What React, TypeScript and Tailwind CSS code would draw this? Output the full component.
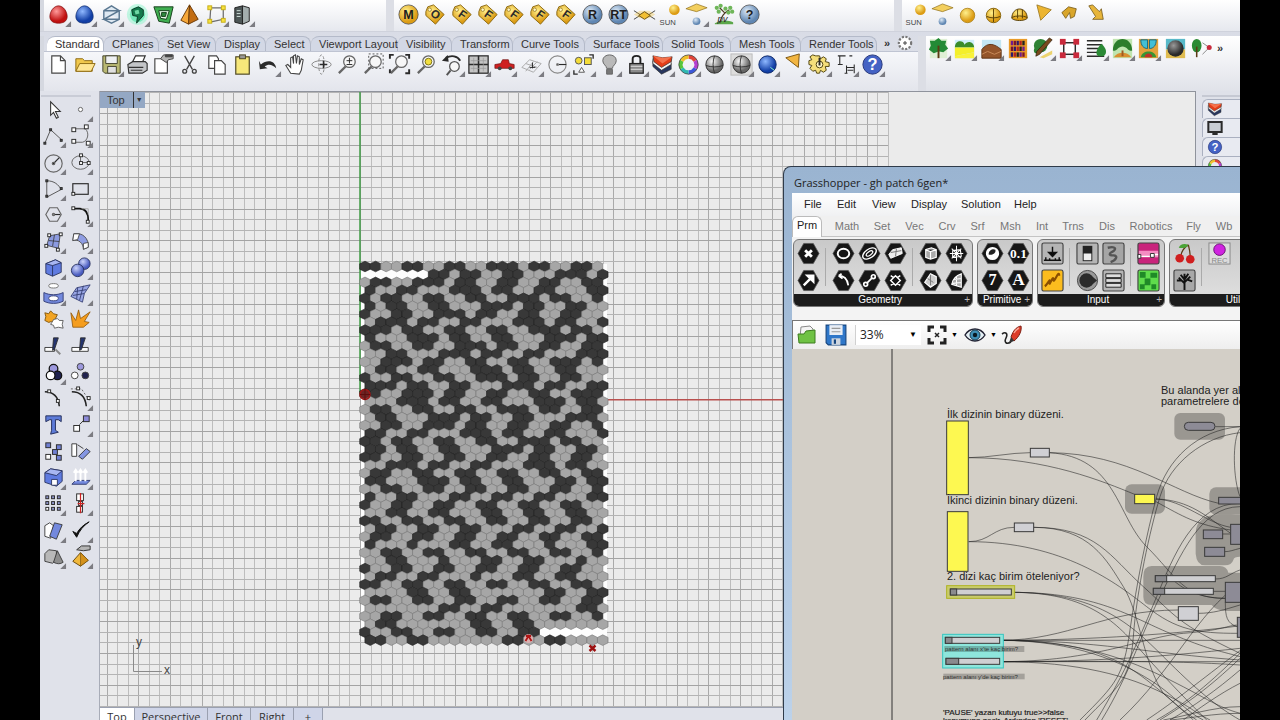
import { useState } from 'react';
import type { ReactNode } from 'react';

const INK = '#2b2b2b';

// One string per row of tiles: "#" dark, "." light, blank for a missing tile
const TILES = [
    '##..##..##..###.##..##.',
    '      ##.##..##...###.#',
    '.##..###.##..##..##..##',
    '#..##...###.##..##...##',
    '#.##..##..##..###.##..#',
    '#.##..##...###.##..##..',
    '#..##..###.##..##..##..',
    '.###.##..##...###.##..#',
    '###.##..##..##..###.##.',
    '#...###.##..##...###.##',
    '.##..##..###.##..##..##',
    '..##...###.##..##...###',
    '..###.##..##..##..###.#',
    '.##..##...###.##..##...',
    '#..##..##..###.##..##..',
    '###.##..##...###.##..##',
    '##..###.##..##..##..###',
    '...###.##..##...###.##.',
    '.##..##..##..###.##..##',
    '.##...###.##..##...###.',
    '..##..###.##..##..##..#',
    '##..##...###.##..##...#',
    '##.##..##..##..###.##..',
    '##.##..##...###.##..##.',
    '##..##..##..##..##..##.',
    '..###.##..##...###.##..',
    '.##..##..##..##..##..##',
    '##...###.##..##...##.##',
    '..##..##..##..##..##..#',
    '#..##...##..##..##...##',
    '#..##..##..##..##..##..',
    '..##..##...##..##..##..',
    '##..##..##..##..##..##.',
    '.##..##..##...##..##..#',
    '.##..##..##..##..##..##',
    '#...#...##..##...#...##',
    '..##..##..##..##..##..#',
    '..##...#...##..##...#..',
    '#..##..##..##..##..##..',
    '.##..##...#...##..##...',
    '##..##..##..##..##..##.',
    '....##..##.......##..##',
    '.##..##..##..##..##..##',
    '.......##..##.......##.',
    '..##..##..##..##..##..#',
    '.##.......##..##.......',
    '#..##..##..##..##      ',
    '##..##.......##..##....',
];

const tag = (letter: string) => (
    <g>
        <path d="M3 9 5 4 11 2 22 12 13 22 3 13z" fill="url(#gold)" stroke="#8d6a14" strokeWidth="1" />
        <circle cx="7" cy="7" r="1.8" fill="#fff6c0" stroke="#8d6a14" strokeWidth=".7" />
        <text x="13" y="16" textAnchor="middle" fontSize="12" fontWeight="bold" fill={INK} transform="rotate(35 13 12)">{letter}</text>
    </g>
);

const badge = (letter: string, fill: string) => (
    <g>
        <circle cx="12" cy="12" r="10" fill={fill} stroke="#4b4b4b" strokeWidth=".8" />
        <text x="12" y="17" textAnchor="middle" fontSize="13" fontWeight="bold" fill="#1d1d1d">{letter}</text>
    </g>
);

const lens = (
    <g fill="none" stroke="#666">
        <circle cx="14" cy="9" r="6" fill="#f7f7f7" strokeWidth="1.3" />
        <path d="M10 14 3 21" strokeWidth="2.4" />
    </g>
);

const sq = (x: number, y: number, fill = '#fff', s = 4) => (
    <rect x={x} y={y} width={s} height={s} fill={fill} stroke={INK} strokeWidth="1" />
);

const GLYPHS: Record<string, ReactNode> = {
    redBall: <path d="M12 3C7 3 3 9 3 14c0 5 4 7 9 7s9-2 9-7c0-5-4-11-9-11z" fill="url(#red)" stroke="#7d0d0d" strokeWidth=".7" />,
    blueBall: <path d="M12 3C7 3 3 9 3 14c0 5 4 7 9 7s9-2 9-7c0-5-4-11-9-11z" fill="url(#blue)" stroke="#0b2767" strokeWidth=".7" />,
    wireCube: <path d="M12 3 20 8v9l-8 4-8-4V8zM4 8h16L4 17h16M12 3 4 8" fill="#dfe9f2" stroke="#5b7891" strokeWidth="1.5" />,
    glow: (
        <g>
            <circle cx="12" cy="12" r="11" fill="#8df5cb" opacity=".5" />
            <circle cx="12" cy="12" r="8" fill="#55e3aa" opacity=".7" />
            <path d="M6 7l7-3 5 3v6l-7 8 1-7-5-1z" fill="#157a4d" stroke="#0c3b28" />
            <path d="M9 8l4-1 1 4-4 1z" fill="#6fd9a5" />
        </g>
    ),
    greenBox: (
        <g stroke="#173f1c">
            <path d="M2 4h20l-4 17-11-2z" fill="#3fae50" />
            <path d="M7 8h11l-3 9-6-1z" fill="#e2f7e5" />
            <path d="M10 10h5l-1 4h-4z" fill="#2e8a3e" />
        </g>
    ),
    pyramid: <g stroke="#6b3a07"><path d="M12 2 3 18l8 4z" fill="#f6a83a" /><path d="M12 2l9 15-10 5z" fill="#c26d13" /></g>,
    cage: (
        <g stroke="#6d6d6d">
            <path d="M6 5h13v12L5 20z" fill="none" strokeWidth="1.3" />
            {[[3, 3], [17, 3], [17, 16], [3, 17]].map(([x, y]) => <rect key={`${x}${y}`} x={x} y={y} width="4" height="4" fill="#f7e23b" stroke="#c7ae1a" />)}
        </g>
    ),
    server: <g stroke="#222"><path d="M4 5l8-2v19l-8-2z" fill="#4d5656" /><path d="M12 3l7 2v14l-7 3z" fill="#a3adad" /><path d="M6 8h4M6 11h4M6 14h4" stroke="#cfe0da" /></g>,
    badgeM: badge('M', 'url(#gold)'),
    tagO: tag('O'),
    tagF: tag('F'),
    badgeR: badge('R', 'url(#steel)'),
    badgeRT: badge('RT', 'url(#steel)'),
    badgeQ: badge('?', 'url(#steel)'),
    layers: <g stroke="#6d5310"><path d="M1 8l11 7 11-7M1 17l11-7 11 7" fill="none" stroke="#444" /><path d="M1 12l6-4h10l6 4-6 4H7z" fill="#f2bf31" fillOpacity=".35" stroke="none" /><path d="M6 13l6-4 6 4-6 4z" fill="#f2bf31" /></g>,
    sun: <g><circle cx="16" cy="7" r="5.5" fill="url(#gold)" /><text x="9" y="23" textAnchor="middle" fontSize="8" fill="#444">SUN</text></g>,
    skylight: <g><path d="M1 6 12 1l11 4-11 4z" fill="#f3cf5e" stroke="#8b6a13" strokeWidth=".7" /><circle cx="12" cy="19" r="4" fill="url(#steel)" /></g>,
    plant: (
        <g>
            <path d="M3 21c8-4 14-3 19-1v2H3z" fill="#5ba74a" />
            <path d="M8 21c2-9 6-11 10-14M13 10 8 5" stroke="#4b3b20" strokeWidth="1.3" fill="none" />
            {[[5, 5], [9, 3], [14, 6], [19, 5], [17, 10], [7, 9], [21, 9]].map(([x, y]) => <circle key={`${x}-${y}`} cx={x} cy={y} r="2.2" fill="#6fb659" />)}
            <text x="11" y="20" textAnchor="middle" fontSize="10" fontStyle="italic" fill={INK}>pv</text>
        </g>
    ),
    goldBall: <circle cx="12" cy="13" r="7.5" fill="url(#gold)" stroke="#a67a10" strokeWidth=".8" />,
    goldGlobe: <g stroke="#8a6810"><circle cx="12" cy="13" r="7.5" fill="url(#gold)" /><path d="M5 14c4 2 10 2 14 0M12 6v14" fill="none" stroke="#584107" /></g>,
    goldDome: <g stroke="#584107"><path d="M4 16c0-13 16-13 16 0-3 3-13 3-16 0z" fill="url(#gold)" /><path d="M4 15c4-2 12-2 16 0M10 7v9M15 7v9" fill="none" /></g>,
    goldTri: <path d="M3 2l15 5-11 11z" fill="#ecb531" stroke="#94711b" strokeWidth=".8" />,
    goldArch: <path d="M3 10l7-6 8 2-2 8-4 2-1-6-4 6z" fill="#d9a62b" stroke="#715513" strokeWidth=".8" />,
    goldArrow: <path d="M4 3l4-1 7 7 2-3 2 11H8l3-3z" fill="#e7b53a" stroke="#715513" strokeWidth=".8" />,
    page: <path d="M5 3h9l5 5v13H5zM14 3v5h5" fill="#fff" stroke="#444" strokeWidth="1.2" />,
    folder: <g stroke="#8f6b12"><path d="M3 6h7l2 2h8v11H3z" fill="#f1c84c" /><path d="M3 19l4-8h16l-4 8z" fill="#ffe693" /></g>,
    disk: <g stroke="#44442e"><path d="M3 3h18v18H5l-2-2z" fill="#b9b873" /><path d="M6 3h12v8H6z" fill="#eef0f3" /><path d="M8 14h9v7H8z" fill="#e0e0e0" /></g>,
    printer: <g stroke="#333" strokeWidth="1.2"><path d="M7 9l3-6h10l-3 7z" fill="#fff" /><path d="M2 12l5-3h13l2 2v7l-5 3H3z" fill="#c3c5c8" /><path d="M3 15h15M5 18h12" /></g>,
    notes: <g stroke="#444"><path d="M3 6h13v15H3z" fill="#fff" strokeWidth="1.2" /><path d="M9 6l3-4h10v4l-5 1-2 3z" fill="#b5b5b5" /><path d="M14 2h7v2h-7z" fill="#444" /></g>,
    cut: <g fill="none" stroke="#444" strokeWidth="1.4"><path d="M7 3l8 14M17 3 9 17" /><circle cx="7" cy="19" r="2" /><circle cx="17" cy="19" r="2" /></g>,
    copy: <g fill="#fff" stroke="#444" strokeWidth="1.2"><path d="M4 3h8l2 3v10H4z" /><path d="M10 8h7l4 4v10H10z" /></g>,
    paste: <g stroke="#4d4622"><rect x="5" y="4" width="14" height="18" fill="#f7e87a" strokeWidth="1.2" /><rect x="9" y="2" width="6" height="4" fill="#999" /></g>,
    undo: <path d="M2 8l1 9 8-1-3-2c4-3 8-2 12 2-1-8-9-10-16-4z" fill={INK} />,
    hand: <path d="M8 21 3 13l2-1 3 3V5l2-1 1 7V3l2-1 1 9 1-8 2 1v8l2-6 2 1-2 11-2 4z" fill="#fff" stroke="#444" strokeWidth="1.1" />,
    rotate: <g fill="none" stroke="#888"><ellipse cx="12" cy="12" rx="10" ry="4" /><ellipse cx="12" cy="12" rx="3" ry="10" strokeDasharray="3 2" /><path d="M14 8v8M10 12h8" stroke={INK} strokeWidth="1.4" /></g>,
    zoomIn: <g>{lens}<path d="M11 8h6M14 5v6M11 12h6" stroke={INK} /></g>,
    zoomWin: <g>{lens}<rect x="7" y="1" width="15" height="15" fill="none" stroke="#555" strokeDasharray="2 2" /></g>,
    zoomExt: <g>{lens}<path d="M2 6V2h4M18 2h4v4M22 17v4h-4M2 17v4" fill="none" stroke={INK} strokeWidth="2" /></g>,
    zoomSel: <g>{lens}<circle cx="14" cy="9" r="3.5" fill="#f2df3f" stroke="#7d7315" /></g>,
    zoomUndo: <g><circle cx="14" cy="14" r="5" fill="#f7f7f7" stroke="#555" strokeWidth="1.3" /><path d="M10 18l-4 5" stroke="#555" strokeWidth="2" /><path d="M5 5c6-3 12-2 15 3" stroke={INK} strokeWidth="2" fill="none" /><path d="M1 8l6-6 1 7z" fill={INK} /></g>,
    fourView: <g fill="#c4c4c4" stroke={INK}><rect x="2" y="3" width="20" height="18" strokeWidth="1.3" /><path d="M12 3v18M2 12h20" strokeWidth="1.6" /><path d="M7 5v14M17 5v14M4 8h16M4 16h16" stroke="#9a9a9a" strokeWidth=".7" /></g>,
    car: <g><path d="M2 12l6-1 2-4h6l1 4 5 1v4H2z" fill="#cf2121" stroke="#6d0d0d" strokeWidth=".7" /><circle cx="7" cy="16" r="2" fill="#444" /><circle cx="18" cy="16" r="2" fill="#444" /></g>,
    cplane: <g fill="none" stroke="#aaa"><path d="M2 15 10 7l12 4-8 9zM6 11l12 4M10 17l8-8M6 19l8-10" /><path d="M10 15h6M13 10v6" stroke={INK} /></g>,
    circleTool: <g fill="none" stroke="#888" strokeWidth="1.2"><circle cx="12" cy="12" r="9" /><path d="M12 12h9" stroke={INK} /><circle cx="12" cy="12" r="1" fill={INK} /></g>,
    shapes: <g stroke="#555"><circle cx="7" cy="8" r="3.5" fill="#f4dc38" /><rect x="13" y="5" width="7" height="7" fill="#f4dc38" /><path d="M7 20l3-5 3 5z" fill="#fff" /><path d="M18 2h4v4M2 18v4h4" fill="none" stroke={INK} strokeWidth="1.4" /></g>,
    bulb: <g stroke="#666"><path d="M9 16c0-3-4-4-4-8 0-8 14-8 14 0 0 4-4 5-4 8z" fill="#b9b9b9" /><path d="M9 17h6v5H9z" fill="#777" /></g>,
    lock: <g stroke="#222" strokeWidth="1.3"><path d="M8 11V6c0-4 8-4 8 0v5" fill="none" strokeWidth="2" /><rect x="5" y="11" width="14" height="10" fill="#8b8b8b" /><path d="M6 14h12M6 17h12" stroke="#ccc" /></g>,
    render: <g stroke="#333" strokeWidth=".7"><path d="M2 8v6l9 8 10-5v-6z" fill="#27365f" /><path d="M2 6v5l9 7 10-6V6z" fill="#f4f4f4" /><path d="M2 3l10 2 10-1-1 5-10 6-8-6z" fill="#e43d18" /><path d="M2 3l10 2 10-1-10 7z" fill="#f4714c" stroke="none" /></g>,
    wheel: (
        <g fill="none" strokeWidth="4">
            <path d="M12 4a8 8 0 0 1 7 4" stroke="#e0453a" /><path d="M19 8a8 8 0 0 1 0 8" stroke="#b53ed0" /><path d="M19 16a8 8 0 0 1-7 4" stroke="#3b57d9" />
            <path d="M12 20a8 8 0 0 1-7-4" stroke="#2fb8b2" /><path d="M5 16a8 8 0 0 1 0-8" stroke="#56c63a" /><path d="M5 8a8 8 0 0 1 7-4" stroke="#f0c02c" />
            <circle cx="12" cy="12" r="10" stroke="#444" strokeWidth=".8" />
        </g>
    ),
    greyGlobe: <g stroke="#333"><circle cx="12" cy="12" r="9" fill="url(#grey)" /><path d="M3 13c6 2 12 2 18 0M12 3c-2 5-2 13 0 18" fill="none" /></g>,
    greyGlobe2: <g stroke="#333"><rect x="1" y="1" width="22" height="22" fill="#ddd" stroke="#bbb" /><circle cx="12" cy="12" r="9" fill="url(#grey)" /><path d="M3 13c6 2 12 2 18 0M12 3c-2 5-2 13 0 18" fill="none" /></g>,
    blueGlobe: <g><circle cx="12" cy="12" r="9" fill="url(#blue)" stroke="#0b2767" /><path d="M15 15l4 3" stroke="#8fc" /></g>,
    cone: <path d="M4 5 18 1l-1 14z" fill="#f2b541" stroke="#7b5512" />,
    gear: <g stroke="#4f430f"><path d="M9 3h3l1 3 3-2 3 2-1 3 4 1v4l-4 0 1 4-3 2-3-2-1 3h-3l-1-3-3 1-3-3 2-3-3-1v-4l3-1-2-3 3-2 3 1z" fill="#f5df7b" /><circle cx="12" cy="12" r="3.5" fill="#fff7c9" /><path d="M12 5v8" stroke={INK} strokeWidth="2" /></g>,
    dims: <g fill="none" stroke={INK} strokeWidth="1.1"><path d="M3 3h8M5 3v9M3 12h5M12 13v8M12 15l8 0M20 12v9M10 21h3M13 18h6M15 3h3" /></g>,
    help: <g><circle cx="12" cy="12" r="10" fill="#4462c4" stroke="#27377a" /><text x="12" y="18" textAnchor="middle" fontSize="17" fontWeight="bold" fill="#fff">?</text></g>,
    tree: <g><path d="M3 2h18v20H3z" fill="#dff0d5" /><path d="M12 1l3 3 5 0-1 4 3 4-5 4-4-1-1 0-5 2-5-4 2-4-1-5 5 0z" fill="#238a35" /><path d="M12 9v13" stroke="#5b3b14" strokeWidth="2" /></g>,
    park: <g><rect x="2" y="3" width="20" height="19" fill="#cfeefb" /><path d="M2 11c0-8 9-8 10-3 3-5 10-3 10 3z" fill="#3b8c2b" /><path d="M2 11h20v5L2 20z" fill="#f4ef2a" /><path d="M2 20l20-4v6H2z" fill="#f9f23a" /></g>,
    terrain: <g><rect x="2" y="3" width="20" height="19" fill="#c4e6f3" /><path d="M2 13c6-8 13-6 20 0v9H2z" fill="#94552a" stroke="#5e3212" /><path d="M2 18l6-3 7 3 7-3" stroke="#c98a58" fill="none" /></g>,
    shelf: (
        <g>
            <rect x="3" y="2" width="19" height="20" fill="#e99b28" />
            {[4, 10, 16].map((y) => [5, 8, 11, 14, 17].map((x, i) => <rect key={`${x}-${y}`} x={x} y={y} width="2.4" height="4.6" fill={['#7a1230', '#2d1a6b', '#b32222', '#222', '#701b8f'][(i + y) % 5]} />))}
        </g>
    ),
    paint: <g><circle cx="9" cy="9" r="7" fill="#2f8235" /><circle cx="5" cy="14" r="3" fill="#2f8235" /><path d="M21 3 8 18l-4 2 1-5L18 1z" fill="#7a4a1d" stroke="#2d1a08" strokeWidth=".7" /><path d="M8 21l13-7v4l-9 4z" fill="#ecd36d" /></g>,
    frame: <g><rect x="6" y="6" width="12" height="12" fill="#fff" stroke={INK} strokeWidth="1.5" />{[[2, 2], [16, 2], [2, 16], [16, 16]].map(([x, y]) => <rect key={`${x}${y}`} x={x} y={y} width="6" height="6" fill="#c92a3c" />)}</g>,
    list: <g><path d="M2 4h16M2 8h16M2 12h16M2 16h16M2 20h18" stroke={INK} strokeWidth="1.5" /><path d="M14 20c-5-3 0-10 3-13 5 4 7 10 2 13z" fill="#2b8a36" /></g>,
    arch: <g><rect x="2" y="2" width="20" height="20" fill="#bfe5b0" /><path d="M2 14c0-16 20-16 20 0-4 2-5-4-10-4S6 16 2 14z" fill="#2c7d2c" /><path d="M3 21c4-6 14-6 18 0z" fill="#d98f30" /><path d="M12 14v6" stroke="#a05a20" strokeWidth="2" /></g>,
    garden: <g><rect x="2" y="2" width="20" height="20" fill="#e3a23b" /><path d="M4 3h7v9c-4 0-7-3-7-9zM13 3h7c0 6-3 9-7 9z" fill="#42bfd6" stroke="#176a80" /><path d="M4 21c1-8 15-8 16 0z" fill="#399533" /><path d="M8 21c0-5 8-5 8 0z" fill="#c2302a" /></g>,
    sphere: <g><path d="M2 2h20v11H2z" fill="#58b9c9" /><path d="M2 13h20v9H2z" fill="#e0bc50" /><circle cx="12" cy="12" r="8.5" fill="url(#dark)" /></g>,
    treePin: <g><ellipse cx="7" cy="9" rx="5" ry="7" fill="#2a8a33" /><path d="M7 10v11" stroke="#5b3b14" strokeWidth="1.6" /><path d="M13 6l7 5-7 7" fill="none" stroke="#888" /><circle cx="20" cy="11" r="2.6" fill="#c92a3c" /></g>,
    arrow: <path d="M9 4v14l3-3 3 6 2-1-3-6h5z" fill="#fff" stroke="#333" strokeWidth="1.1" />,
    point: <circle cx="12" cy="12" r="2.2" fill="#fff" stroke="#666" />,
    polyline: <g stroke="#555" fill="none"><path d="M3 20 9 6l12 11" />{sq(2, 19, '#555', 2)}{sq(8, 5, '#555', 2)}{sq(19, 16, '#555', 2)}</g>,
    curve: <g stroke="#666" fill="none"><path d="M5 5h12c5 5 2 13-3 14H5" />{sq(3, 4)}{sq(3, 16)}{sq(16, 1)}{sq(18, 18)}</g>,
    circle: <g stroke="#666" fill="none" strokeWidth="1.2"><circle cx="12" cy="13" r="9" /><path d="M12 13l6-6" stroke={INK} /><circle cx="12" cy="13" r="1.3" fill={INK} /></g>,
    ellipse: <g stroke="#666" fill="none"><ellipse cx="12" cy="12" rx="9" ry="7" /><path d="M12 5v7h9" />{sq(11, 3, '#fff', 3)}{sq(11, 11, '#fff', 3)}{sq(19, 11, '#fff', 3)}</g>,
    arc: <g stroke="#555" fill="none"><path d="M5 4c8 0 12 4 15 9L5 21z" />{sq(4, 3, '#555', 2)}{sq(19, 11, '#555', 2)}{sq(4, 19, '#555', 2)}</g>,
    rect: <g stroke={INK} fill="none"><rect x="4" y="7" width="16" height="11" strokeWidth="1.2" />{sq(3, 16, '#fff', 3)}</g>,
    hexagon: <g stroke="#666" fill="none" strokeWidth="1.2"><path d="M4 12l4-7h8l4 7-4 7H8z" /><path d="M12 12h7" stroke={INK} /><circle cx="12" cy="12" r="1.2" /></g>,
    fillet: <g fill="none"><path d="M5 6h6c6 0 9 4 9 12" stroke="#111" strokeWidth="1.8" /><path d="M13 6h7v6" stroke="#aaa" />{sq(3, 4, '#fff', 3)}{sq(18, 18, '#fff', 3)}</g>,
    surface: <g stroke="#333" strokeWidth=".8"><path d="M8 6l11-2-2 15-12-3z" fill="#8c9be0" /><path d="M13 5l-2 12M7 11l11 1" fill="none" />{sq(6, 4, '#fff', 3)}{sq(18, 3, '#fff', 3)}{sq(3, 15, '#fff', 3)}{sq(15, 19, '#fff', 3)}</g>,
    sweep: <g stroke="#444" strokeWidth=".9"><path d="M5 4c9-2 16 5 15 14l-5 2C15 14 10 9 4 11z" fill="#8f9de3" /><path d="M5 4l6 0-2 6-5 1zM15 14l5-1v5l-5 2z" fill="#fff" /></g>,
    box: <g stroke="#26305c" strokeWidth=".9"><path d="M4 8l10-4 6 3v10l-9 4-7-3z" fill="#5f7be0" /><path d="M4 8l7 2 9-3-6-3z" fill="#a7b6f2" /><path d="M11 10v11" /></g>,
    spheres: <g stroke="#26305c" strokeWidth=".9"><circle cx="16" cy="8" r="6" fill="url(#lav)" /><circle cx="9" cy="15" r="6.5" fill="url(#lav)" /></g>,
    tube: <g stroke="#39437a"><ellipse cx="12" cy="4" rx="5" ry="2.3" fill="#fff" stroke="#777" /><path d="M2 11c6 3 14 3 20 0v9c-6 3-14 3-20 0z" fill="#7389de" /><ellipse cx="12" cy="17" rx="5" ry="2.6" fill="#fff" /></g>,
    patch: <g stroke="#333c70" strokeWidth=".9"><path d="M2 15 8 6l14-3-6 9-2 9z" fill="#98a5e4" /><path d="M6 10l12-2M9 6l-1 12M15 4l-4 15M4 14l12-2" fill="none" /></g>,
    puzzle: <g strokeWidth=".9"><path d="M3 5l4 1 2-3 3 3 4 1-2 4 1 4-5-1-3 1-4-2 1-4z" fill="#f2a423" stroke="#7b5008" /><path d="M12 12l4-1 2 2 4 0-1 4 1 4-5-1-4 1-1-3-3-1 2-3z" fill="#fff" stroke="#555" /></g>,
    explode: <path d="M2 5l5 8 3-11 2 9 10-7-6 10 5 1-6 5H4z" fill="#f59d1e" stroke="#8c5406" strokeWidth=".8" />,
    trim: <g stroke={INK} strokeWidth=".9"><path d="M3 13h10v4H3z" fill="#fff" /><path d="M12 3h5l-4 12-2 1z" fill="#24346f" /><path d="M14 15l5 5" stroke="#888" strokeWidth="2" /></g>,
    split: <g stroke={INK} strokeWidth=".9"><path d="M3 13h17v4H3z" fill="#fff" /><path d="M12 3h5l-4 12-2 1z" fill="#24346f" /></g>,
    join: <g stroke="#111" strokeWidth="1.3"><circle cx="12" cy="8" r="4.5" fill="#9c98dd" /><circle cx="16" cy="15" r="4.5" fill="#20224e" /><circle cx="9" cy="15" r="4.5" fill="#fff" /></g>,
    dots: <g stroke="#444"><circle cx="12" cy="6" r="3.5" fill="#9c98dd" /><circle cx="6" cy="15" r="3.5" fill="#fff" /><circle cx="17" cy="15" r="3.5" fill="#20224e" /></g>,
    editPts: <g fill="none"><path d="M3 5c9 0 14 6 15 15" stroke="#222" strokeWidth="1.6" />{sq(6, 3, '#fff', 3)}{sq(15, 13, '#fff', 3)}</g>,
    ctrlPts: <g fill="none"><path d="M3 5c9 0 14 6 15 15" stroke="#222" strokeWidth="1.6" /><path d="M2 2h11l8 12" stroke="#666" strokeDasharray="2 2" />{sq(8, 0, '#fff', 3)}{sq(19, 10, '#fff', 3)}</g>,
    text: <path d="M4 3h16l0 6-3-2h-3v11l3 2-8 2 1-4V7H8L4 9z" fill="#5d7bd8" stroke="#26305c" />,
    move: <g stroke={INK}>{sq(5, 13, '#fff', 6)}{sq(15, 3, '#8c8ad8', 6)}<path d="M11 12l4-4" /></g>,
    copies: <g>{sq(4, 3, '#6f7fd2', 5)}{sq(15, 5, '#6f7fd2', 5)}{sq(11, 10, '#6f7fd2', 5)}{sq(4, 15, '#fff', 5)}{sq(15, 16, '#6f7fd2', 5)}</g>,
    orient: <g stroke={INK} strokeWidth=".9"><path d="M3 4h5v13H3z" fill="#fff" /><path d="M10 17l8-8 4 3-8 8z" fill="#8496e2" /><path d="M9 5l6 4" /></g>,
    solid: <g stroke="#26305c" strokeWidth=".9"><path d="M3 7l6-4 12 2v11l-6 5-12-4z" fill="#5f7be0" /><path d="M3 7l12 3 6-5-12-2z" fill="#a7b6f2" /><path d="M10 14h6v6h-6z" fill="#fff" /></g>,
    project: <g><path d="M3 19l4-4h15l-4 4z" fill="#7389de" stroke="#333c70" /><path d="M7 16V5M12 16V5M17 16V5M5 7l2-3 2 3M10 7l2-3 2 3M15 7l2-3 2 3" stroke="#fff" strokeWidth="2" fill="none" /></g>,
    array: <g>{[4, 10, 16].map((x) => [4, 10, 16].map((y) => <g key={`${x}-${y}`}>{sq(x, y, y === 16 && x === 4 ? '#fff' : '#8c92c9', 3)}</g>))}</g>,
    align: <g>{sq(8, 2, '#fff', 7)}{sq(10, 10, '#fff', 4)}{sq(8, 15, '#fff', 6)}<path d="M12 1v21M9 12h7" stroke="#c22" strokeWidth="1.3" /></g>,
    bend: <g stroke="#333" strokeWidth=".9"><path d="M3 7l5-3 4 3-3 13-6-2z" fill="#fff" /><path d="M13 4l8 2-6 15-7-3z" fill="#7389de" /></g>,
    check: <path d="M4 13l4 6C11 12 15 7 21 3 15 6 11 10 8 15z" fill="#111" stroke="#111" />,
    prims: <g stroke="#333" strokeWidth=".9"><path d="M3 9l4-4 8 1v9l-4 4-8-2z" fill="#b8b8b8" /><path d="M16 6l6 12c-3 2-6 2-10 0z" fill="#8d8d8d" /></g>,
    analyze: <g stroke="#6b4a0b"><path d="M4 17l8-9 8 8-8 6z" fill="#f0b83c" /><path d="M12 8v14l8-6z" fill="#d4921c" strokeWidth=".6" /><path d="M8 5l5-4h9v4l-7 1z" fill="#b5b5b5" stroke="#333" /></g>,
};

const ROW_A: [string, string, boolean?][] = [
    ['redBall', 'V-Ray render', true], ['blueBall', 'V-Ray RT', true], ['wireCube', 'Mesh box', true], ['glow', 'Emitter', true],
    ['greenBox', 'Deform', true], ['pyramid', 'Pyramid', true], ['cage', 'Cage edit', true], ['server', 'Render server', true],
];

const ROW_B: [string, string, boolean?][] = [
    ['badgeM', 'Material editor'], ['tagO', 'Options'], ['tagF', 'Frame 1'], ['tagF', 'Frame 2'], ['tagF', 'Frame 3'], ['tagF', 'Frame 4'], ['tagF', 'Frame 5'],
    ['badgeR', 'Render'], ['badgeRT', 'Render RT'], ['layers', 'Planes'], ['sun', 'Sun'], ['skylight', 'Dome light', true], ['plant', 'Proxy plant'], ['badgeQ', 'About'],
];

const ROW_C: [string, string, boolean?][] = [
    ['sun', 'Add sun'], ['skylight', 'Add skylight'], ['goldBall', 'Omni light'], ['goldGlobe', 'Sphere light'],
    ['goldDome', 'Dome'], ['goldTri', 'Spot light'], ['goldArch', 'IES light'], ['goldArrow', 'Directional light'],
];

const ROW_STANDARD: [string, string, boolean?][] = [
    ['page', 'New'], ['folder', 'Open'], ['disk', 'Save', true], ['printer', 'Print'], ['notes', 'Notes'], ['cut', 'Cut'], ['copy', 'Copy'], ['paste', 'Paste'],
    ['undo', 'Undo', true], ['hand', 'Pan'], ['rotate', 'Rotate view'], ['zoomIn', 'Zoom dynamic'], ['zoomWin', 'Zoom window'], ['zoomExt', 'Zoom extents'],
    ['zoomSel', 'Zoom selected'], ['zoomUndo', 'Undo view', true], ['fourView', 'Four views', true], ['car', 'Named views', true], ['cplane', 'Set CPlane', true],
    ['circleTool', 'Object snap', true], ['shapes', 'Select', true], ['bulb', 'Hide', true], ['lock', 'Lock', true], ['render', 'Layers', true], ['wheel', 'Colors', true],
    ['greyGlobe', 'Shade'], ['greyGlobe2', 'Shade selected', true], ['blueGlobe', 'Render preview', true], ['cone', 'Spotlight', true], ['gear', 'Properties', true],
    ['dims', 'Dimensions', true], ['help', 'Help', true],
];

const ROW_LANDS: [string, string, boolean?][] = [
    ['tree', 'Plants', true], ['park', 'Ground', true], ['terrain', 'Terrain', true], ['shelf', 'Library'], ['paint', 'Materials', true], ['frame', 'Zones', true],
    ['list', 'Lists', true], ['arch', 'Arch', true], ['garden', 'Garden', true], ['sphere', 'Image'], ['treePin', 'Tag plant'],
];

const PALETTE: [string, string, boolean?][] = [
    ['arrow', 'Cancel'], ['point', 'Point', true], ['polyline', 'Polyline', true], ['curve', 'Curve', true], ['circle', 'Circle', true], ['ellipse', 'Ellipse', true],
    ['arc', 'Arc', true], ['rect', 'Rectangle', true], ['hexagon', 'Polygon', true], ['fillet', 'Fillet', true], ['surface', 'Surface', true], ['sweep', 'Sweep', true],
    ['box', 'Box', true], ['spheres', 'Boolean', true], ['tube', 'Surface tools', true], ['patch', 'Mesh', true], ['puzzle', 'Join'], ['explode', 'Explode'],
    ['trim', 'Trim'], ['split', 'Split'], ['join', 'Group', true], ['dots', 'Ungroup'], ['editPts', 'Edit points'], ['ctrlPts', 'Control points', true],
    ['text', 'Text'], ['move', 'Move', true], ['copies', 'Copy objects'], ['orient', 'Orient'], ['solid', 'Solid edit', true], ['project', 'Project', true],
    ['array', 'Array', true], ['align', 'Align', true], ['bend', 'Bend', true], ['check', 'Check', true], ['prims', 'Block', true], ['analyze', 'Analyze', true],
];

function Tool({ icon, label, more }: { icon: string; label: string; more?: boolean }) {
    return (
        <button type="button" aria-label={label} title={label} className="flex items-center justify-center">
            <svg viewBox="0 0 27 27" className="size-[26px] shrink-0">
                <g transform="translate(1 1)">{GLYPHS[icon]}</g>
                {more && <path d="M26 20v6h-6z" fill="#7c7c82" />}
            </svg>
        </button>
    );
}

const tools = (list: [string, string, boolean?][]) => list.map(([icon, label, more]) => <Tool key={label} icon={icon} label={label} more={more} />);

const RHINO_TABS: [string, string][] = [
    ['Standard', 'w-[57px]'], ['CPlanes', 'w-[55px]'], ['Set View', 'w-[57px]'], ['Display', 'w-[50px]'], ['Select', 'w-[45px]'],
    ['Viewport Layout', 'w-[87px]'], ['Visibility', 'w-[54px]'], ['Transform', 'w-[61px]'], ['Curve Tools', 'w-[72px]'],
    ['Surface Tools', 'w-[78px]'], ['Solid Tools', 'w-[68px]'], ['Mesh Tools', 'w-[70px]'], ['Render Tools', 'w-[76px]'],
];

function RhinoToolbars() {
    const [active, setActive] = useState('Standard');

    return (
        <header className="text-[11px] text-[#333]">
            <div className="flex h-8 border-b border-[#cfd2dc] bg-linear-to-b from-white to-[#e6e8ee]">
                <div className="flex w-[346px] border-l-4 border-[#d5d8e0] pb-[2px]">
                    <div className="ml-[2px] grid w-[210px] grid-cols-8">{tools(ROW_A)}</div>
                </div>
                <div className="flex w-[508px] border-l-8 border-[#dcdee5] pb-[2px]">
                    <div className="ml-[2px] grid w-[367px] grid-cols-14">{tools(ROW_B)}</div>
                </div>
                <div className="flex flex-1 border-l-8 border-[#dcdee5] pb-[2px]">
                    <div className="ml-[2px] grid w-[206px] grid-cols-8">{tools(ROW_C)}</div>
                </div>
            </div>
            <div className="flex h-[59px] bg-linear-to-b from-[#d9dce6] to-[#e2e4eb] pt-1">
                <div className="flex w-[878px] flex-col border-l-4 border-[#d5d8e0]">
                    <div className="flex h-4 items-end border-b border-[#bfc4d2] pl-[3px]">
                        {RHINO_TABS.map(([name, width]) => (
                            <button
                                key={name}
                                type="button"
                                onClick={() => setActive(name)}
                                className={`${width} h-[15px] shrink-0 rounded-t-lg border-t border-r border-[#b4bac9] pl-2 text-left leading-[14px] whitespace-nowrap ${active === name ? 'bg-white' : 'bg-[#d3d8e5]'}`}
                            >
                                {name}
                            </button>
                        ))}
                        <button type="button" aria-label="More tabs" className="w-5 text-center leading-4 font-bold">»</button>
                        <button type="button" aria-label="Toolbar options" className="h-4 w-4">
                            <svg viewBox="0 0 16 16" className="size-4">
                                <circle cx="8" cy="8" r="6" fill="#fff" stroke="#777" strokeWidth="2.5" strokeDasharray="2 1.5" />
                                <circle cx="8" cy="8" r="5" fill="#fff" />
                                <path d="M6 8h4M8 6v4" stroke="#444" />
                            </svg>
                        </button>
                    </div>
                    <div className="flex flex-1 items-start bg-linear-to-b from-[#f6f7fa] to-[#e3e5ec]">
                        <div className="ml-[2px] grid w-[840px] grid-cols-32">{tools(ROW_STANDARD)}</div>
                    </div>
                </div>
                <div className="flex flex-1 items-start border-l-8 border-[#dcdee5] bg-linear-to-b from-white to-[#e0e2e9]">
                    <div className="grid w-[289px] grid-cols-11">{tools(ROW_LANDS)}</div>
                    <button type="button" aria-label="More tools" className="px-[2px] leading-6 font-bold">»</button>
                </div>
            </div>
        </header>
    );
}

// Lines fall every 10.56 units, counted out from the origin of the plane
function Grid() {
    const cols = Array.from({ length: 75 }, (_, i) => i - 24);
    const rows = Array.from({ length: 59 }, (_, i) => i - 29);
    return (
        <g shapeRendering="crispEdges" strokeWidth="1">
            {cols.map((n) => (
                <path key={`c${n}`} d={`M${Math.round(360 + n * 10.56) + 0.5} 92V707`} stroke={n % 3 ? '#bdbdbd' : '#aaaaaa'} />
            ))}
            {rows.map((n) => (
                <path key={`r${n}`} d={`M100 ${Math.round(399 + n * 10.58) + 0.5}H888`} stroke={n % 3 ? '#b4b4b4' : '#a4a4a4'} />
            ))}
        </g>
    );
}

function HexPanel() {
    return (
        <g strokeWidth=".6">
            <rect x="361" y="264" width="246" height="376" fill="#fdfdfd" />
            {TILES.map((row, r) =>
                row.split('').map((cell, c) => {
                    if (cell === ' ') return null;
                    const x = 365 + c * 10.57 + (r % 2) * 5.2;
                    const y = 266.5 + r * 7.95;
                    const dark = cell === '#';
                    return (
                        <path
                            key={`${r}-${c}`}
                            d={`M${x} ${y - 5.3}l5.3 2.6v5.4l-5.3 2.6l-5.3-2.6v-5.4z`}
                            fill={dark ? '#383838' : '#a6a6a6'}
                            stroke={dark ? '#1f1f1f' : '#757575'}
                        />
                    );
                }),
            )}
        </g>
    );
}

function Viewport() {
    return (
        <section className="relative min-h-0 flex-1 overflow-hidden border-t border-r border-[#8f939c] bg-[#ebebeb]">
            <svg viewBox="100 92 1096 615" preserveAspectRatio="xMinYMin slice" className="size-full">
                <Grid />
                <path d="M360 92V394" stroke="#3f9b45" strokeWidth="1.5" />
                <rect x="608" y="399" width="280" height="1.5" fill="#b9504f" />
                <HexPanel />
                <circle cx="365" cy="394.5" r="5" fill="#8d1717" fillOpacity=".6" stroke="#a01515" strokeWidth="1.5" />
                <path d="M360 394.5h10M365 389v11" stroke="#5e0c0c" />
                <circle cx="528.5" cy="638.5" r="4.5" fill="#f3b6b6" fillOpacity=".7" />
                <path d="M525.5 641l3-5 3 5M526 636h5" stroke="#b01515" strokeWidth="1.8" fill="none" />
                <path d="M589.5 645.5l6 5.5M595.5 645.5l-6 5.5" stroke="#9b1111" strokeWidth="2.4" />
                <path d="M133.5 645V671.5H162" stroke="#8a8a8a" fill="none" />
                <text x="136" y="646" fontSize="12" fill="#444">y</text>
                <text x="164" y="674" fontSize="12" fill="#444">x</text>
            </svg>
            <button type="button" className="absolute top-0 left-0 flex h-4 items-center bg-[#94a8c4] pl-[7px] text-[11px] leading-4 text-[#333]">
                <span className="pr-2">Top</span>
                <span className="border-l border-[#333] px-[2px] text-[7px]">▼</span>
            </button>
        </section>
    );
}

const VIEW_TABS: [string, string][] = [['Top', 'w-[35px]'], ['Perspective', 'w-[73px]'], ['Front', 'w-[43px]'], ['Right', 'w-[43px]'], ['+', 'w-[29px]']];

function SidePanel() {
    return (
        <aside className="w-11 shrink-0 bg-[#dfe1e9] pt-1 pl-[6px]">
            <div className="mb-[2px] h-[2px] bg-[#c6c9d3]" />
            {['render', 'monitor', 'help', 'wheel'].map((name) => (
                <button key={name} type="button" aria-label={`${name} panel`} className="flex h-[19px] w-full items-center rounded-tl-md border-t border-l border-[#aab0c0] bg-[#e8eaf1] pl-1">
                    <svg viewBox="0 0 24 24" className="size-4">
                        {name === 'monitor' ? <g stroke={INK}><rect x="2" y="3" width="20" height="15" fill="#c8ccd2" strokeWidth="3" /><path d="M8 21h8" strokeWidth="3" /></g> : GLYPHS[name]}
                    </svg>
                </button>
            ))}
        </aside>
    );
}

// ---- Grasshopper window ----

const hex = (inner: ReactNode) => (
    <g>
        <path d="M1 12 7 1.5h10L23 12l-6 10.5H7z" fill="#161616" stroke="#555" strokeWidth=".8" />
        <g fill="none" stroke="#fff" strokeWidth="1.8">{inner}</g>
    </g>
);

const plate = (inner: ReactNode, fill = '#b5b5b5') => (
    <g>
        <rect x="1" y="1" width="22" height="22" rx="2" fill={fill} stroke="#444" strokeWidth="1.2" />
        {inner}
    </g>
);

const hexText = (t: string, size: number) => (
    <text x="12" y="17" textAnchor="middle" fontSize={size} fontWeight="bold" fill="#fff" stroke="none" className="font-['Liberation_Serif',serif]">{t}</text>
);

const GH_ICONS: Record<string, ReactNode> = {
    Point: hex(<path d="M8.5 8.5l7 7M15.5 8.5l-7 7" strokeWidth="3" />),
    Vector: hex(<path d="M7 17l7-7M11 7h6v6z" fill="#fff" strokeWidth="2.5" />),
    Circle: hex(<ellipse cx="12" cy="12" rx="6" ry="5" strokeWidth="2" />),
    'Circular arc': hex(<path d="M7 7c6 0 9 4 10 10M7 7l4 3M7 7l3-2" />),
    Curve: hex(<g><ellipse cx="12" cy="12" rx="8" ry="4.5" transform="rotate(-35 12 12)" strokeWidth="1.5" /><ellipse cx="12" cy="12" rx="4" ry="1.8" transform="rotate(-35 12 12)" strokeWidth="1.3" /></g>),
    Line: hex(<g><path d="M8 16l8-8" /><circle cx="8" cy="16" r="2" fill="#161616" /><circle cx="16" cy="8" r="2" fill="#161616" /></g>),
    Plane: hex(<g><path d="M5 13l4-5 9-2 1 6-12 5z" fill="#eee" strokeWidth="1" /><path d="M7 11l11-2M13 7l-1 8" stroke="#777" strokeWidth="1" /></g>),
    Rectangle: hex(<path d="M12 7l5 5-5 5-5-5zM7 7l3 2M17 17l-3-2M17 7l-3 2M7 17l3-2" strokeWidth="1.5" />),
    Box: hex(<path d="M7 8l6-2 5 2v8l-6 2-5-2zM7 8l5 2 6-2M12 10v8" fill="#aaa" strokeWidth="1.2" />),
    Brep: hex(<g><path d="M6 14l6-9 6 3v7l-6 4z" fill="#ccc" strokeWidth="1.2" /><path d="M9 10l6 4M12 6v11" stroke="#777" strokeWidth="1" /></g>),
    Mesh: hex(<path d="M12 4v16M5 12h14M7 7l10 10M17 7L7 17M8 9l8-1 1 7-9 1z" strokeWidth="1.1" />),
    Surface: hex(<path d="M7 16c1-6 4-9 10-11v14zM9 11l8-1M8 15l9-1M12 8v9" fill="#aaa" strokeWidth="1.1" />),
    Boolean: hex(<g><circle cx="12" cy="12" r="6" fill="#fff" /><path d="M8 13a5 5 0 0 1 7-5c1 4-4 6-7 5z" fill="#222" stroke="none" /></g>),
    Integer: hex(hexText('7', 17)),
    Number: hex(hexText('0.1', 14)),
    Text: hex(hexText('A', 18)),
    Slider: plate(<path d="M12 5v8M8 11l4 4 4-4zM3 19h18M5 16v3M9 17v2M15 17v2M19 16v3" stroke="#111" strokeWidth="1.5" />),
    Panel: plate(<path d="M4 18c3-2 6-10 5-4s4-9 4-3 6-12 6-4" fill="none" stroke="#8a4f00" strokeWidth="2.2" />, '#fbbc1e'),
    Toggle: plate(<g><rect x="7" y="4" width="10" height="16" fill="#222" /><rect x="8" y="12" width="8" height="7" fill="#eee" /></g>),
    Knob: <g><circle cx="12" cy="12" r="10.5" fill="#999" stroke="#444" /><circle cx="11" cy="12" r="7.5" fill="#2b2b2b" /><path d="M16 7l6 5-6 5z" fill="#2b2b2b" /></g>,
    Graph: plate(<path d="M6 6c9-2 9 2 5 4s-4 4 1 4 3 5-3 7" fill="none" stroke="#555" strokeWidth="2.5" />, '#a5a5a5'),
    'Value list': plate(<path d="M4 5h16v4H4zM4 10h16v4H4zM4 15h16v4H4z" fill="#ddd" stroke="#222" />),
    Gradient: plate(<g><path d="M2 9h20v7H2z" fill="#f48cc2" /><path d="M2 15h13v-2h7" fill="none" stroke="#fff" strokeWidth="1.5" /><path d="M1 13h3v4H1zM14 12h4v4h-4z" fill="#fff" stroke="#333" /></g>, '#c9247c'),
    Image: plate(<g fill="#1f8a27"><path d="M3 3h6v6H3zM14 4h7v5h-7zM8 10h6v7H8zM3 16h5v5H3zM15 16h5v5h-5z" /></g>, '#5fdc4c'),
    Cherry: <g><path d="M8 15C9 9 11 6 16 3M18 16c0-6-1-9-2-13" stroke="#5a3a12" strokeWidth="1.3" fill="none" /><path d="M16 3C11 1 7 3 6 6c4 1 8 0 10-3z" fill="#4aa436" /><circle cx="7" cy="17" r="4.5" fill="#d01f1f" /><circle cx="18" cy="18" r="4.5" fill="#d01f1f" /></g>,
    Tree: plate(<path d="M12 22v-9M12 15L6 9M12 14l6-6M12 14V5M9 12L4 12M15 11l5 2M8 6l4 5 4-6" stroke="#111" strokeWidth="2" fill="none" />, '#a8a8a8'),
    Recorder: <g><rect x="1" y="1" width="22" height="22" fill="#dcdcdc" stroke="#888" /><circle cx="12" cy="8" r="6" fill="#d023e0" stroke="#6b1274" /><text x="12" y="22" textAnchor="middle" fontSize="8" fill="#888">REC</text></g>,
};

// Each inner list is a block of icons, filled row by row
const GH_GROUPS: { name: string; width: string; blocks: string[][] }[] = [
    { name: 'Geometry', width: 'w-[180px]', blocks: [['Point', 'Vector'], ['Circle', 'Curve', 'Plane', 'Circular arc', 'Line', 'Rectangle'], ['Box', 'Mesh', 'Brep', 'Surface']] },
    { name: 'Primitive', width: 'w-[56px]', blocks: [['Boolean', 'Number', 'Integer', 'Text']] },
    { name: 'Input', width: 'w-[128px]', blocks: [['Slider', 'Panel'], ['Toggle', 'Graph', 'Knob', 'Value list'], ['Gradient', 'Image']] },
    { name: 'Util', width: 'w-[134px]', blocks: [['Cherry', 'Tree'], ['Recorder']] },
];

const blockCols = (n: number) => (n === 6 ? 'grid-cols-3' : n === 4 ? 'grid-cols-2' : 'grid-cols-1');

const GH_MENU: [string, string][] = [['File', 'w-[33px]'], ['Edit', 'w-[35px]'], ['View', 'w-[39px]'], ['Display', 'w-[50px]'], ['Solution', 'w-[53px]'], ['Help', 'w-[40px]']];

const GH_TABS: [string, string][] = [
    ['Math', 'w-[38px]'], ['Set', 'w-8'], ['Vec', 'w-[33px]'], ['Crv', 'w-8'], ['Srf', 'w-[29px]'], ['Msh', 'w-[37px]'], ['Int', 'w-[26px]'],
    ['Trns', 'w-9'], ['Dis', 'w-8'], ['Robotics', 'w-14'], ['Fly', 'w-[29px]'], ['Wb', 'w-8'],
];

const WIRES = [
    'M116 263C180 263 240 248 300 248',
    'M116 263C350 263 520 335 614 373',
    'M358 248C600 250 730 370 866 400',
    'M358 248C560 260 560 440 650 530S760 685 885 685',
    'M116 515C180 515 190 472 253 472',
    'M116 515C400 515 560 640 650 710S800 790 925 790',
    'M311 472C480 472 530 570 580 650S640 880 700 970L790 1050',
    'M311 472C500 472 540 560 640 650S740 760 930 850',
    'M245 667C500 667 600 740 720 790S860 840 930 860',
    'M245 667C480 667 560 760 640 850S780 1000 830 1050',
    'M245 667C500 667 600 760 700 860S860 1010 930 1050',
    'M210 811H930',
    'M210 811C420 811 520 720 745 720',
    'M210 811C480 811 760 790 925 768',
    'M210 811C450 811 560 860 650 930S740 1010 800 1050',
    'M210 811C450 811 600 870 720 930S860 1010 930 1030',
    'M210 811C440 811 580 880 660 930S760 1020 820 1050',
    'M210 811C500 811 650 850 930 870',
    'M210 875H930',
    'M210 875C500 875 640 800 760 790S880 770 920 765',
    'M210 875C450 875 600 920 700 970S780 1020 840 1050',
    'M210 875C500 875 700 860 930 835',
    'M210 875C500 875 700 870 930 885',
    'M930 170C800 180 710 270 680 380S620 640 600 780S560 940 450 1050',
    'M930 188C820 200 720 280 690 380S620 660 610 800S560 950 465 1050',
    'M930 400C790 400 730 560 680 680S590 900 500 1050',
    'M930 410C810 410 750 560 690 680S600 910 515 1050',
    'M930 640C800 730 730 900 570 1050',
    'M930 842C800 940 740 990 650 1050',
    'M930 850C820 960 750 1010 680 1050',
    'M930 865C830 960 770 1000 690 1050',
    'M930 900C860 960 790 1010 720 1050',
    'M930 940C870 970 800 1020 760 1050',
    'M930 1010C850 1010 760 1040 700 1050',
    'M930 1030C850 1030 780 1045 720 1050',
    'M678 387C780 390 830 440 902 490',
    'M678 387C760 390 830 460 902 472',
    'M678 395C760 440 800 465 902 480',
    'M856 170H930M930 175C905 210 910 330 930 380',
    'M856 627C890 627 900 610 930 600M850 664H886M710 610C760 670 830 685 886 685',
    'M805 730C850 730 880 720 930 705M878 492H902M884 545C900 545 910 540 930 535',
    'M886 697C886 740 890 760 922 770',
];

function Canvas() {
    return (
        <div className="min-h-0 flex-1 overflow-hidden bg-[#d3cfc7]">
            <svg viewBox="792 349 448 371" preserveAspectRatio="xMinYMin slice" className="size-full">
                <path d="M892 349V720" stroke="#333" strokeWidth="1" />
                <g transform="translate(930 370) scale(.33333)" stroke="#3a3a3a" strokeWidth="3">
                    <g fill="#000" fillOpacity=".27" stroke="none">
                        <rect x="733" y="129" width="152" height="80" rx="18" />
                        <rect x="585" y="343" width="120" height="88" rx="20" />
                        <rect x="838" y="352" width="120" height="82" rx="20" />
                        <path d="M815 450c15-20 60-15 115-15v125q-18 0-20 10q-5 16-25 16h-60q-25 0-28-35v-60q0-30 18-41z" />
                        <path d="M665 588h205q20 0 25 20h35v115h-35q-35 0-50-18H665q-25 0-25-25V620q0-32 25-32z" />
                    </g>
                    <g fill="none" stroke="#222" strokeOpacity=".7" strokeWidth="2.4">
                        {WIRES.map((d) => <path key={d} d={d} />)}
                    </g>
                    <g fill="#fdf851">
                        <rect x="50" y="153" width="65" height="221" />
                        <rect x="52" y="425" width="62" height="179" />
                        <rect x="614" y="373" width="60" height="28" />
                    </g>
                    <g fill="#d0d0d4">
                        <rect x="301" y="235" width="57" height="26" />
                        <rect x="253" y="459" width="58" height="26" />
                        <rect x="745" y="710" width="60" height="41" />
                    </g>
                    <g fill="#8d8b96">
                        <rect x="763" y="157" width="92" height="24" rx="12" />
                        <rect x="866" y="382" width="70" height="20" />
                        <rect x="820" y="480" width="58" height="26" />
                        <rect x="824" y="532" width="60" height="27" />
                        <rect x="902" y="463" width="40" height="60" />
                        <rect x="886" y="637" width="60" height="60" />
                        <rect x="922" y="742" width="30" height="60" />
                    </g>
                    <rect x="50" y="647" width="204" height="38" fill="#c9cc6c" stroke="#aeb320" />
                    <rect x="38" y="793" width="182" height="101" fill="#8ee6dc" stroke="#36c5c0" />
                    {[[61, 657, 183, 19], [46, 802, 163, 20], [48, 865, 161, 38], [676, 617, 180, 34], [670, 655, 180, 34]].map(([x, y, w, k]) => (
                        <g key={`${x}-${y}`}>
                            <rect x={x} y={y} width={w} height="18" fill="#cfcfd2" />
                            <rect x={x} y={y} width={k} height="18" fill="#8a8a8e" />
                        </g>
                    ))}
                    <rect x="43" y="828" width="240" height="18" fill="#000" fillOpacity=".22" stroke="none" />
                    <rect x="40" y="911" width="244" height="17" fill="#000" fillOpacity=".22" stroke="none" />
                </g>
                <g fontSize="11" fill="#1d1d1d">
                    <text x="947" y="418">İlk dizinin binary düzeni.</text>
                    <text x="947" y="504">İkinci dizinin binary düzeni.</text>
                    <text x="947" y="580">2. dizi kaç birim öteleniyor?</text>
                    <text x="1161" y="394">Bu alanda yer alan</text>
                    <text x="1161" y="405">parametrelere dokun</text>
                </g>
                <g fontSize="6" fill="#333">
                    <text x="945" y="651">pattern alanı x'te kaç birim?</text>
                    <text x="943" y="679">pattern alanı y'de kaç birim?</text>
                </g>
                <g fontSize="8" fill="#1d1d1d" stroke="#1d1d1d" strokeWidth=".2">
                    <text x="943" y="715">'PAUSE' yazan kutuyu true&gt;&gt;false</text>
                    <text x="943" y="723">konumuna geçir. Ardından 'RESET'</text>
                </g>
            </svg>
        </div>
    );
}

function GrasshopperWindow() {
    const [zoom, setZoom] = useState('33%');

    return (
        <section className="absolute top-[166px] right-0 bottom-0 left-[743px] flex flex-col overflow-hidden rounded-tl-lg border-t border-l border-[#2f3b4a] bg-linear-to-b from-[#9ab4d1] to-[#bcd2ea] pl-2">
            <h1 className="h-[26px] shrink-0 pt-2 pl-[2px] font-['Open_Sans',sans-serif] text-[11px] leading-4 text-[#222]">Grasshopper - gh patch 6gen*</h1>
            <nav className="flex h-[23px] shrink-0 items-center bg-linear-to-b from-white to-[#f0f1f3] pl-3 text-[11px] text-[#222]">
                {GH_MENU.map(([name, width]) => <button key={name} type="button" className={`${width} text-left`}>{name}</button>)}
            </nav>
            <div className="flex h-[21px] shrink-0 items-end bg-[#f0f0f0] text-[11px] text-[#777]">
                <button type="button" className="h-[21px] w-[34px] rounded-t-md border border-b-0 border-[#bbb] bg-white pb-1 text-[#222]">Prm</button>
                <div className="flex h-5 flex-1 items-center border-b border-[#c4c4c4] pl-[6px]">
                    {GH_TABS.map(([name, width]) => <button key={name} type="button" className={`${width} shrink-0 text-center`}>{name}</button>)}
                </div>
            </div>
            <div className="flex h-[83px] shrink-0 items-start gap-1 bg-[#f3f3f3] pt-[2px] pl-px">
                {GH_GROUPS.map((group) => (
                    <div key={group.name} className={`${group.width} flex h-[68px] shrink-0 flex-col overflow-hidden rounded-md border border-[#777] bg-linear-to-b from-[#c9c9c9] to-[#e2e2e2]`}>
                        <div className="flex flex-1 pl-px">
                            {group.blocks.map((block, i) => (
                                <div key={i} className="flex">
                                    {i > 0 && <div className="mx-1 my-2 w-px bg-[#aaa]" />}
                                    <div className={`grid content-start ${blockCols(block.length)}`}>
                                        {block.map((name) => (
                                            <button key={name} type="button" aria-label={name} title={name} className="flex h-[27px] w-[26px] items-center justify-center">
                                                <svg viewBox="0 0 24 24" className="size-[23px]">{GH_ICONS[name]}</svg>
                                            </button>
                                        ))}
                                    </div>
                                </div>
                            ))}
                        </div>
                        <div className="flex h-3 items-center bg-[#1c1c1c] px-[2px] text-[10px] leading-3 text-white">
                            <span className="flex-1 text-center">{group.name}</span>
                            <span className="text-[#bbb]">+</span>
                        </div>
                    </div>
                ))}
            </div>
            <div className="flex h-[29px] shrink-0 items-center border-t border-l border-[#777] bg-linear-to-b from-white to-[#eeeeee] pl-1">
                <button type="button" aria-label="Open file" className="mr-2">
                    <svg viewBox="0 0 20 20" className="size-5"><path d="M4 2l9-1 3 3v8H3z" fill="#f4f4f4" stroke="#888" /><path d="M1 9l6 0 2-3 9-1v13H2z" fill="#6fc244" stroke="#3c7d1e" /></svg>
                </button>
                <button type="button" aria-label="Save file" className="mr-2">
                    <svg viewBox="0 0 20 20" className="size-[22px]"><path d="M1 1h18v18H3l-2-2z" fill="#2f77c9" stroke="#16467f" /><path d="M4 1h12v9H4z" fill="#e9eef5" /><path d="M6 4h8M6 7h8" stroke="#999" /><path d="M6 13h8v6H6z" fill="#cfd6df" /><path d="M8 14h2v4H8z" fill="#16467f" /></svg>
                </button>
                <div className="relative mr-[6px] flex h-5 w-[66px] items-center border-l border-[#d0d0d0] bg-white">
                    <select aria-label="Zoom" value={zoom} onChange={(e) => setZoom(e.target.value)} className="w-full appearance-none pl-1 font-['Open_Sans',sans-serif] text-xs text-[#222]">
                        <option>33%</option>
                        <option>50%</option>
                        <option>100%</option>
                    </select>
                    <span className="pointer-events-none absolute right-1 text-[8px] text-black">▼</span>
                </div>
                <button type="button" aria-label="Zoom extents" className="flex items-center">
                    <svg viewBox="0 0 20 20" className="size-5"><path d="M2 7V2h5M13 2h5v5M18 13v5h-5M7 18H2v-5" fill="none" stroke="#222" strokeWidth="3" /><path d="M8 8l4 4M12 8l-4 4" stroke="#222" strokeWidth="1.5" /></svg>
                    <span className="px-1 text-[7px] text-black">▼</span>
                </button>
                <button type="button" aria-label="Preview" className="ml-[2px] flex items-center">
                    <svg viewBox="0 0 22 20" className="h-5 w-[22px]"><path d="M1 10c5-8 15-8 20 0-5 8-15 8-20 0z" fill="#e6f1f6" stroke="#223" strokeWidth="1.4" /><circle cx="11" cy="10" r="5" fill="#3f8fb5" stroke="#1a3d50" /><circle cx="11" cy="10" r="2.2" fill="#0b1a22" /></svg>
                    <span className="px-1 text-[7px] text-black">▼</span>
                </button>
                <button type="button" aria-label="Sketch">
                    <svg viewBox="0 0 22 20" className="h-5 w-[22px]"><path d="M1 9c4-3 6 0 4 4s0 7 5 4" fill="none" stroke="#222" strokeWidth="1.6" /><path d="M10 12C12 6 15 2 20 1c1 5-2 11-7 15z" fill="#dd3b28" stroke="#7d1c10" /><path d="M13 8c1-2 3-4 5-5" stroke="#f7a292" strokeWidth="1.5" fill="none" /><path d="M10 12l-2 6 5-2z" fill="#333" /></svg>
                </button>
            </div>
            <Canvas />
        </section>
    );
}

function Gradients() {
    const balls: [string, string, string][] = [
        ['red', '#ff9a9a', '#c01010'], ['blue', '#8fb8ff', '#123fa6'], ['gold', '#fff08c', '#dc9c14'],
        ['steel', '#dce9f6', '#5f86b2'], ['grey', '#ffffff', '#666666'], ['lav', '#ccd4fb', '#4a5cc0'], ['dark', '#9a9a9a', '#2a2a2a'],
    ];
    return (
        <svg className="absolute size-0" aria-hidden="true">
            <defs>
                {balls.map(([id, from, to]) => (
                    <radialGradient key={id} id={id} cx=".38" cy=".32" r=".75">
                        <stop offset="0" stopColor={from} />
                        <stop offset=".75" stopColor={to} />
                    </radialGradient>
                ))}
            </defs>
        </svg>
    );
}

export default function App() {
    return (
        <div className="h-screen overflow-hidden bg-black px-10 font-['Liberation_Sans',Arial,sans-serif]">
            <Gradients />
            <main className="relative flex h-full flex-col overflow-hidden bg-[#e0e2ea]">
                <RhinoToolbars />
                <div className="flex min-h-0 flex-1">
                    <aside className="w-[60px] shrink-0 border-r border-[#a8acb8] pt-1 pl-px">
                        <div className="mr-2 h-[2px] bg-[#c9ccd6]" />
                        <div className="grid h-[473px] w-[53px] grid-cols-2 grid-rows-18">{tools(PALETTE)}</div>
                    </aside>
                    <div className="flex min-w-0 flex-1 flex-col">
                        <Viewport />
                        <div className="flex h-[13px] shrink-0 items-start overflow-hidden border-t border-[#9aa0b0] font-['Open_Sans',sans-serif] text-[11px] text-[#333]">
                            {VIEW_TABS.map(([name, width], i) => (
                                <button key={name} type="button" className={`${width} h-5 shrink-0 border-r border-[#9aa0b0] pb-[2px] leading-[18px] ${i === 0 ? 'bg-white' : 'bg-[#cfd5e8]'}`}>{name}</button>
                            ))}
                        </div>
                    </div>
                    <SidePanel />
                </div>
                <GrasshopperWindow />
            </main>
        </div>
    );
}
